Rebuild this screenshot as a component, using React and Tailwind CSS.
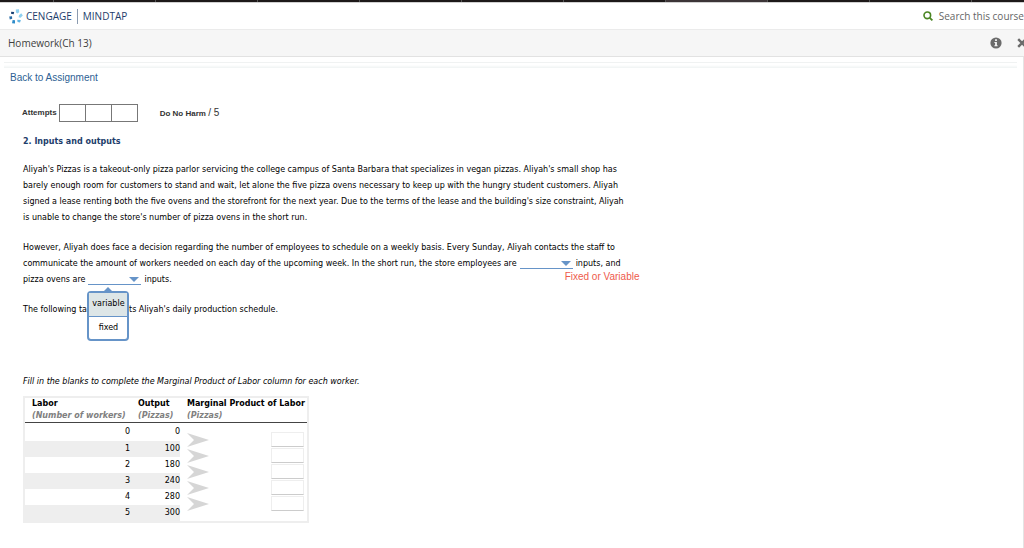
import { useState } from 'react'

const workers = [
  { labor: 0, output: 0 },
  { labor: 1, output: 100 },
  { labor: 2, output: 180 },
  { labor: 3, output: 240 },
  { labor: 4, output: 280 },
  { labor: 5, output: 300 },
]

function Logo() {
  return (
    <svg viewBox="0 0 14 15" className="h-[15px] w-[14px]" aria-hidden="true">
      <path d="M6.8 0.4L10 0.2L10.2 3.2L8.4 4.6L7 3.4Z" fill="#8fd0f0" />
      <path d="M12.2 4.2L13.8 6.6L11.6 8.8L9.6 8.2L10 6.2Z" fill="#8fd0f0" />
      <path d="M8.2 10.8L11.8 11L11 13.4L8.6 13Z" fill="#5fb4e4" />
      <path d="M3.6 11L6 11.2L6 14.4L3 14.2Z" fill="#2f8cc9" />
      <path d="M0.2 7.6L3 7.2L3.2 9.8L0.8 10.4Z" fill="#2a6ea8" />
      <path d="M2.2 2.8L5.2 3L4.6 5.2L2 4.8Z" fill="#163f73" />
    </svg>
  )
}

function Blank({ label, value, onChange, children }) {
  return (
    <span className="relative mx-[3px] inline-block h-2.5 w-[53px] border-b border-[#6694c8] align-middle">
      <select
        aria-label={label}
        value={value}
        onChange={e => onChange(e.target.value)}
        className="block h-full w-full cursor-pointer appearance-none bg-transparent"
      >
        <option value=""></option>
        <option value="variable">variable</option>
        <option value="fixed">fixed</option>
      </select>
      <svg viewBox="0 0 10 5" className="pointer-events-none absolute right-0.5 top-0.5 h-[5px] w-[10px]" aria-hidden="true">
        <path d="M0 0H10L5 5Z" fill="#6694c8" />
      </svg>
      {children}
    </span>
  )
}

function App() {
  const [first, setFirst] = useState("")
  const [second, setSecond] = useState("")
  const [open, setOpen] = useState(true)
  const [answers, setAnswers] = useState(["", "", "", "", ""])

  const pick = (value) => {
    setSecond(value)
    setOpen(false)
  }

  const handleAnswer = (index, value) => {
    const newAnswers = [...answers]
    newAnswers[index] = value
    setAnswers(newAnswers)
  }

  return (
    <div className="min-h-screen bg-white font-['DejaVu_Sans',sans-serif] text-black">
      <div className="flex h-0.5 overflow-hidden bg-[#1d1919]">
        <div className="w-[54px] shrink-0 border-r border-[#555]"></div>
        {[1, 2, 3, 4, 5, 6, 7, 8, 9].map(i => (
          <div key={i} className={i === 7 ? "w-[102px] shrink-0 border-r border-[#555] bg-[#3c3537]" : "w-[102px] shrink-0 border-r border-[#555]"}></div>
        ))}
      </div>

      <header className="flex h-7 items-center justify-between overflow-hidden border-b border-t border-b-[#ebebeb] border-t-[#d0d0d0] pl-[9px] font-['Open_Sans',sans-serif]">
        <div className="flex items-center text-[10px] leading-4 text-[#1d3d6b]">
          <Logo />
          <span className="ml-[3px]">CENGAGE</span>
          <span className="mx-[5px] h-[15px] w-px bg-[#8b9bb0]"></span>
          <span>MINDTAP</span>
        </div>
        <button className="flex items-center gap-1.5 whitespace-nowrap text-[10px] leading-4 text-[#666]">
          <svg viewBox="0 0 10 10" className="size-[10px]" fill="none" stroke="#4a8522" aria-hidden="true">
            <circle cx="4.3" cy="4.3" r="3.3" strokeWidth="1.6" />
            <path d="M6.8 6.8L9.4 9.4" strokeWidth="1.8" />
          </svg>
          Search this course
        </button>
      </header>

      <div className="flex h-[27px] items-center justify-between overflow-hidden border-b border-[#e2e2e2] bg-[#f6f6f6] pl-2 font-['Open_Sans',sans-serif]">
        <h1 className="text-[10px] leading-4 text-[#404040]">Homework(Ch 13)</h1>
        <div className="flex items-center gap-[15px]">
          <button aria-label="Information">
            <svg viewBox="0 0 12 12" className="block size-3" aria-hidden="true">
              <circle cx="6" cy="6" r="5.6" fill="#6b6b6b" />
              <path d="M5.1 2.3H6.9V4H5.1ZM4.4 4.9H6.9V8.2H7.6V9.3H4.4V8.2H5.1V6H4.4Z" fill="#f6f6f6" />
            </svg>
          </button>
          <button aria-label="Close" className="w-[7px] overflow-hidden">
            <svg viewBox="0 0 10 10" className="block size-[10px]" fill="none" stroke="#6b6b6b" strokeWidth="2.4" aria-hidden="true">
              <path d="M1.2 1.2L8.8 8.8M8.8 1.2L1.2 8.8" />
            </svg>
          </button>
        </div>
      </div>

      <main className="border-r border-[#e4e4e4] pb-7 pt-[5px]">
        <div className="ml-1 mr-1.5 h-[6px] border-t border-[#f0f2f2] bg-linear-to-b from-white from-40% to-[#eff3f3]"></div>

        <a href="#assignment" className="ml-2.5 mt-0.5 block w-fit font-['Liberation_Sans',sans-serif] text-[10px] leading-4 text-[#2d5f94]">Back to Assignment</a>

        <div className="ml-[22px] mt-[18px] flex items-center font-['Liberation_Sans',sans-serif] text-[8px] font-bold leading-4 text-[#333]">
          <span>Attempts</span>
          <div className="ml-0.5 flex border-l border-[#777]">
            {[1, 2, 3].map(i => (
              <span key={i} className="h-[18px] w-[26px] border-y border-r border-[#777]"></span>
            ))}
          </div>
          <span className="ml-[22px]">Do No Harm <span className="text-[10px] font-normal">/ 5</span></span>
        </div>

        <div className="ml-[23px] text-[8px] leading-4">
          <h2 className="mt-3 font-bold text-[#1d3d6b]">2. Inputs and outputs</h2>

          <p className="mt-3 whitespace-nowrap">
            Aliyah's Pizzas is a takeout-only pizza parlor servicing the college campus of Santa Barbara that specializes in vegan pizzas. Aliyah's small shop has<br />
            barely enough room for customers to stand and wait, let alone the five pizza ovens necessary to keep up with the hungry student customers. Aliyah<br />
            signed a lease renting both the five ovens and the storefront for the next year. Due to the terms of the lease and the building's size constraint, Aliyah<br />
            is unable to change the store's number of pizza ovens in the short run.
          </p>

          <div className="mt-3.5 whitespace-nowrap">
            However, Aliyah does face a decision regarding the number of employees to schedule on a weekly basis. Every Sunday, Aliyah contacts the staff to<br />
            communicate the amount of workers needed on each day of the upcoming week. In the short run, the store employees are
            <Blank label="Store employees are" value={first} onChange={setFirst}>
              <span className="absolute left-[45px] top-3 font-['Liberation_Sans',sans-serif] text-[10px] leading-3 text-[#ee5a4c]">Fixed or Variable</span>
            </Blank>
            inputs, and<br />
            pizza ovens are
            <Blank label="Pizza ovens are" value={second} onChange={setSecond}>
              {open &&
                <span className="absolute -left-px top-3 z-10 flex w-[42px] flex-col items-center">
                  <svg viewBox="0 0 8 4" className="h-1 w-2" aria-hidden="true">
                    <path d="M4 0L8 4H0Z" fill="#6694c8" />
                  </svg>
                  <span className="flex w-full flex-col items-stretch rounded-sm border-2 border-[#6694c8] bg-white">
                    <button onClick={() => pick("variable")} className="h-6 border-b border-[#6694c8] bg-[#dde6e7]">variable</button>
                    <button onClick={() => pick("fixed")} className="h-[22px]">fixed</button>
                  </span>
                </span>
              }
            </Blank>
            inputs.
          </div>

          <p className="mt-3.5">The following table presents Aliyah's daily production schedule.</p>

          <p className="mt-14 italic">Fill in the blanks to complete the Marginal Product of Labor column for each worker.</p>

          <table className="mt-1.5 border-collapse border-2 border-[#eee]">
            <thead>
              <tr className="h-6 border-b border-[#444] text-left leading-3">
                <th className="w-[108px] pl-[7px]">Labor<br /><em className="text-[#808080]">(Number of workers)</em></th>
                <th className="w-[48px] pl-1.5">Output<br /><em className="text-[#808080]">(Pizzas)</em></th>
                <th className="w-[128px] whitespace-nowrap pl-[7px]">Marginal Product of Labor<br /><em className="text-[#808080]">(Pizzas)</em></th>
              </tr>
            </thead>
            <tbody>
              {workers.map((row, i) => (
                <tr key={row.labor} className="h-4 text-right first:h-[18px] even:bg-[#eee]">
                  <td className="pr-0.5">{row.labor}</td>
                  <td>{row.output}</td>
                  {i === 0 &&
                    <td rowSpan={6} className="bg-white pl-[7px] pr-[3px]">
                      {answers.map((answer, n) => (
                        <div key={n} className="flex h-4 items-center justify-between">
                          <svg viewBox="0 0 22 14" className="h-3.5 w-[22px]" aria-hidden="true">
                            <path d="M0 0L22 7L0 14L7 7Z" fill="#d6d6d6" />
                          </svg>
                          <input
                            type="text"
                            aria-label={"Marginal product of worker " + (n + 1)}
                            value={answer}
                            onChange={e => handleAnswer(n, e.target.value)}
                            className="h-[15px] w-[33px] border border-[#eee] border-b-[#ccc] px-1 text-right"
                          />
                        </div>
                      ))}
                    </td>
                  }
                </tr>
              ))}
            </tbody>
          </table>
        </div>
      </main>
    </div>
  )
}

export default App;
